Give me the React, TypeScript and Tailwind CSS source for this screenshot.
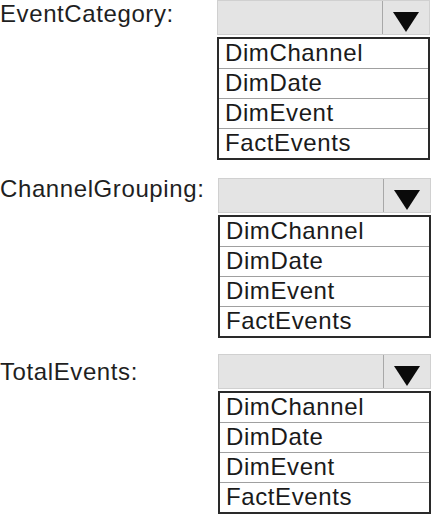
import React from "react";

const options = ["DimChannel", "DimDate", "DimEvent", "FactEvents"];

const Dropdown = ({ label, labelClass, boxClass }: { label: string; labelClass: string; boxClass: string }) => {
  return (
    <div className="flex flex-row">
      <div className={`w-[217px] shrink-0 text-[24px] leading-[28px] tracking-[0.6px] text-[#1f1f1f] ${labelClass}`}>
        {label}
      </div>
      <div className={`flex flex-col w-[213px] ${boxClass}`}>
        <div className="flex flex-row h-[35px] bg-[#e4e4e4] border border-[#d0d0d0]">
          <div className="flex-1 border-r border-[#a8a8a8]"></div>
          <div className="w-[46px] flex justify-center pt-[11px]">
            <svg width="26" height="20" viewBox="0 0 26 20">
              <polygon points="0,0 26,0 13,20" fill="#0a0a0a" />
            </svg>
          </div>
        </div>
        <div className="mt-[2px] border-2 border-[#2a2a2a] bg-white">
          {options.map((o, i) => (
            <div
              key={o}
              className={`pl-[6px] text-[24px] leading-[27px] tracking-[0.6px] text-[#1a1a1a] overflow-hidden whitespace-nowrap ${
                i > 0 ? "h-[30px] border-t border-[#a0a0a0]" : "h-[29px]"
              }`}
            >
              {o}
            </div>
          ))}
        </div>
      </div>
    </div>
  );
};

const App = () => {
  return (
    <div className="w-[434px] h-[514px] bg-white overflow-hidden" style={{ fontFamily: '"Liberation Sans", Arial, sans-serif' }}>
      <div className="flex flex-col">
        <Dropdown label="EventCategory:" labelClass="mt-0" boxClass="ml-0" />
        <div className="mt-[18px]">
          <Dropdown label="ChannelGrouping:" labelClass="-mt-[3px]" boxClass="ml-[1px]" />
        </div>
        <div className="mt-[16px]">
          <Dropdown label="TotalEvents:" labelClass="mt-[4px]" boxClass="ml-[1px]" />
        </div>
      </div>
    </div>
  );
};

export default App;
